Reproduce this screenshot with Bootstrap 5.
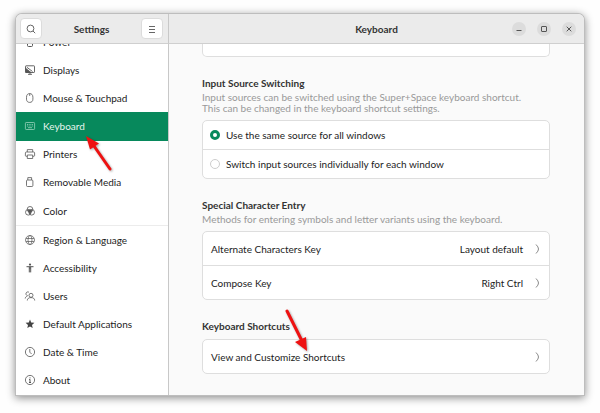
<!DOCTYPE html>
<html lang="en">
<head>
<meta charset="utf-8">
<meta name="viewport" content="width=device-width, initial-scale=1">
<title>Settings – Keyboard</title>
<link rel="stylesheet" href="https://cdn.jsdelivr.net/npm/bootstrap@5.3.0/dist/css/bootstrap.min.css">
<style>
  :root { --accent: #07895c; --line: #dedede; --edge: #c8c8c8; }
  body { font-family: Lato, "Noto Sans", sans-serif; font-size: 10px; font-weight: 400; line-height: 12px; color: #1c1c1c; background: #fefefe; }
  .desk { height: 100vh; min-height: 400px; padding: 14px 16px 18px; }
  .app-window { border-radius: 6px 6px 0 0; background: #fafafa; box-shadow: 0 0 0 1px #bdbdbd, 0 2px 9px 1px rgba(0,0,0,.45); }
  .bar { height: 30px; padding-bottom: 1px; background: #ebebeb; border-bottom: 1px solid #cfcfcf; }
  .bar h1, .bar h2 { font-size: 10px; line-height: 12px; font-weight: 700; color: #333; }
  .side { flex: 0 0 153px; border-right: 1px solid var(--edge); }
  .bar-btn { width: 22px; height: 21px; background: #fff; border: 1px solid #dcdcdc; border-radius: 4px; color: #666; }
  .win-btn { width: 14px; height: 14px; background: #dcdcdc; border: 0; color: #555; }
  .bar-btn svg, .win-btn svg, .nav-row svg, .go svg { display: block; fill: none; stroke: currentColor; }
  .bar-left { padding: 0 5px 0 4px; border-radius: 6px 0 0 0; }
  .bar-right { padding: 0 8px; border-radius: 0 6px 0 0; }
  .win-set { gap: 11px; width: 64px; }
  .side-body { background: #fff; }
  .side-list { margin-top: -16px; }
  .nav-row { color: #1c1c1c; padding: 0 9px 1px; gap: 8px; flex: 1 1 0; min-height: 0; }
  .nav-row svg { width: 10px; height: 10px; color: #555; flex: none; overflow: visible; }
  .nav-row.active { background: var(--accent); color: #e6f5ee; }
  .nav-row.active > svg { color: #9ad3bd; }
  .split { height: 1px; background: #ececec; }
  .pane { padding: 0 34px 0 33px; }
  .pane section { margin-top: 20px; }
  .box { background: #fff; border: 1px solid var(--line); border-radius: 5px; }
  .box-tail { height: 13px; border-top: 0; border-radius: 0 0 5px 5px; }
  .group-title { font-size: 10px; line-height: 12px; font-weight: 700; color: #333; margin: 0; }
  .group-title + .box { margin-top: 7px; }
  .group-note { color: #999; line-height: 11px; margin: 3px 0 6px; }
  .choice { height: 28px; padding: 0 7px; gap: 6px; min-height: 0; }
  .choice .form-check-input { width: 10px; height: 10px; margin: 0; float: none; border: 1px solid #cdcdcd; }
  .choice .form-check-input:checked { border: 3px solid var(--accent); background: #fff none; }
  .go { height: 33px; padding: 0 8px; color: #1c1c1c; background: none; border: 0; }
  .box > * + * { border-top: 1px solid var(--line); }
  .box > .choice + .choice { height: 29px; }
  .box > .go + .go { height: 34px; }
  .go svg { width: 5px; height: 10px; color: #8a8a8a; margin-right: 1px; }
  .nav-row .pointer, .go .pointer { position: absolute; pointer-events: none; z-index: 3; filter: drop-shadow(1px 1px 1px rgba(0,0,0,.35)); overflow: visible; }
  .nav-row .pointer { left: 69px; top: 22px; width: 27px; height: 36px; }
  .go-first .pointer { left: 82px; top: -31px; width: 26px; height: 43px; }
  .pointer line { stroke: #ee1111; stroke-width: 3; stroke-linecap: round; }
  .pointer path { fill: #ee1111; stroke: none; }
</style>
<script src="https://cdn.jsdelivr.net/npm/bootstrap@5.3.0/dist/js/bootstrap.bundle.min.js"></script>
</head>
<body>
<div class="desk d-flex">
  <div class="app-window d-flex flex-column flex-fill">
    <header class="d-flex flex-shrink-0">
      <div class="bar bar-left side d-flex align-items-center justify-content-between">
        <button type="button" class="bar-btn p-0 d-flex align-items-center justify-content-center" aria-label="Search">
          <svg width="10" height="10" viewBox="0 0 10 10"><circle cx="4.5" cy="4.5" r="3.4"/><path d="M7 7l2.2 2.2"/></svg>
        </button>
        <h1 class="m-0">Settings</h1>
        <button type="button" class="bar-btn p-0 d-flex align-items-center justify-content-center" aria-label="Menu">
          <svg width="8" height="8" viewBox="0 0 8 8"><path d="M1 1.5h6M1 4.500h6M1 7.500h6"/></svg>
        </button>
      </div>
      <div class="bar bar-right d-flex align-items-center flex-fill">
        <div class="win-set"></div>
        <h2 class="m-0 flex-fill text-center">Keyboard</h2>
        <div class="win-set d-flex">
          <button type="button" class="win-btn p-0 rounded-circle d-flex align-items-center justify-content-center" aria-label="Minimize"><svg width="8" height="8" viewBox="0 0 8 8"><path d="M1.500 5.500h5"/></svg></button>
          <button type="button" class="win-btn p-0 rounded-circle d-flex align-items-center justify-content-center" aria-label="Maximize"><svg width="8" height="8" viewBox="0 0 8 8"><rect x="1.500" y="1.500" width="5" height="5" rx=".5"/></svg></button>
          <button type="button" class="win-btn p-0 rounded-circle d-flex align-items-center justify-content-center" aria-label="Close"><svg width="8" height="8" viewBox="0 0 8 8"><path d="M1.700 1.700l4.600 4.600M6.300 1.700L1.700 6.300"/></svg></button>
        </div>
      </div>
    </header>
    <div class="d-flex flex-fill overflow-hidden">
      <nav class="side side-body d-flex flex-column overflow-hidden" aria-label="Settings panels">
        <div class="side-list d-flex flex-column flex-fill">
          <a href="#" class="nav-row d-flex align-items-center text-decoration-none"><svg viewBox="0 0 10 10"><rect x="2.500" y="2" width="5" height="7.500" rx="1"/><path d="M4 1h2"/></svg>Power</a>
          <a href="#" class="nav-row d-flex align-items-center text-decoration-none"><svg viewBox="0 0 10 10" stroke-width=".9"><rect x=".5" y=".8" width="9" height="6.700" rx=".6"/><path d="M.8 3.500L6 7.500H.8z" fill="currentColor"/><path d="M3 9.300h4M5 7.500v1.800M1.800 2.200l5.700 4.300" /></svg>Displays</a>
          <a href="#" class="nav-row d-flex align-items-center text-decoration-none"><svg viewBox="0 0 10 10" stroke-width=".8"><path d="M1.500 4.300C1.500 1.800 2.700.6 4.700.6s3.200 1.200 3.200 3.700v1.900c0 2-1.200 3.200-3.200 3.200S1.500 8.200 1.500 6.200z"/><path d="M4.700.6v2.300"/></svg>Mouse &amp; Touchpad</a>
          <a href="#" class="nav-row active position-relative d-flex align-items-center text-decoration-none" aria-current="page"><svg viewBox="0 0 10 10" stroke-width=".8"><rect x=".4" y="1.500" width="9.200" height="7" rx=".8"/><path d="M2 3.500h6M2 5h6" stroke-dasharray="1 .7"/><path d="M3 6.700h4"/></svg>Keyboard
            <svg class="pointer" viewBox="0 0 27 36" aria-hidden="true"><line x1="25" y1="35" x2="9" y2="12"/><path d="M1 2l13 7.500-9 6z"/></svg></a>
          <a href="#" class="nav-row d-flex align-items-center text-decoration-none"><svg viewBox="0 0 10 10" stroke-width=".8"><path d="M2.300 3V.6h5.400V3M2.300 7.300H1.200a.8.8 0 0 1-.8-.8V3.900c0-.5.4-.9.9-.9h7.400c.5 0 .9.4.9.900v2.600c0 .5-.3.8-.8.8H7.700"/><path d="M2.300 6h5.400v3.500H2.300z"/></svg>Printers</a>
          <a href="#" class="nav-row d-flex align-items-center text-decoration-none"><svg viewBox="0 0 10 10" stroke-width=".8"><rect x="1.500" y="3" width="6.400" height="6.500" rx="1"/><path d="M2.800 3V.6h3.800V3"/></svg>Removable Media</a>
          <a href="#" class="nav-row d-flex align-items-center text-decoration-none"><svg viewBox="0 0 10 10" stroke-width=".8"><circle cx="5" cy="3.300" r="2.800"/><circle cx="3.300" cy="6.300" r="2.800"/><circle cx="6.700" cy="6.300" r="2.800"/><path d="M3 4h4L5 8z" fill="currentColor"/></svg>Color</a>
          <div class="split flex-shrink-0"></div>
          <a href="#" class="nav-row d-flex align-items-center text-decoration-none"><svg viewBox="0 0 10 10" stroke-width=".7"><circle cx="5" cy="5" r="4.500"/><ellipse cx="5" cy="5" rx="2" ry="4.500"/><path d="M1 3.500h8M1 6.500h8"/></svg>Region &amp; Language</a>
          <a href="#" class="nav-row d-flex align-items-center text-decoration-none"><svg viewBox="0 0 10 10"><circle cx="5" cy="1.600" r="1.100" fill="currentColor" stroke="none"/><path d="M1.500 3.700h7M5 3.700v2.300M4.300 4v5.400M5.700 4v5.400"/></svg>Accessibility</a>
          <a href="#" class="nav-row d-flex align-items-center text-decoration-none"><svg viewBox="0 0 10 10" stroke-width=".8"><circle cx="6" cy="4.300" r="2"/><path d="M2.300 9.500c0-2 1.500-2.900 3.700-2.900s3.700.9 3.700 2.900M.2 7.500c.1-1.200.8-1.900 2-2.200M4 1.300A1.900 1.900 0 1 0 2.700 4.700"/></svg>Users</a>
          <a href="#" class="nav-row d-flex align-items-center text-decoration-none"><svg viewBox="0 0 10 10"><path fill="#444" stroke="none" d="M5 .6l1.200 2.900 3.200.3-2.400 2.100.7 3.200L5 7.400 2.300 9.100 3 5.900.6 3.800l3.200-.3z"/></svg>Default Applications</a>
          <a href="#" class="nav-row d-flex align-items-center text-decoration-none"><svg viewBox="0 0 10 10" stroke-width=".8"><circle cx="5" cy="5" r="4.600"/><path d="M4.800 2v3.200l1.800 1.800"/></svg>Date &amp; Time</a>
          <a href="#" class="nav-row d-flex align-items-center text-decoration-none"><svg viewBox="0 0 10 10" stroke-width=".8"><circle cx="5" cy="5" r="4.600"/><path d="M5 4.300v3.200M4.200 4.500H5M4 7.500h2M5 2.400v1" stroke-width="1"/></svg>About</a>
        </div>
      </nav>
      <main class="pane flex-fill overflow-hidden">
        <div class="box box-tail"></div>
        <section>
          <div id="switching" class="group-title">Input Source Switching</div>
          <p class="group-note">Input sources can be switched using the Super+Space keyboard shortcut.<br>This can be changed in the keyboard shortcut settings.</p>
          <div class="box" role="radiogroup" aria-labelledby="switching">
            <div class="choice d-flex align-items-center"><input class="form-check-input" type="radio" name="src" id="same" checked><label for="same">Use the same source for all windows</label></div>
            <div class="choice d-flex align-items-center"><input class="form-check-input" type="radio" name="src" id="each"><label for="each">Switch input sources individually for each window</label></div>
          </div>
        </section>
        <section>
          <div class="group-title">Special Character Entry</div>
          <p class="group-note">Methods for entering symbols and letter variants using the keyboard.</p>
          <div class="box">
            <button type="button" class="go w-100 d-flex align-items-center"><span>Alternate Characters Key</span><span class="ms-auto me-2">Layout default</span><svg viewBox="0 0 5 10" class="ms-1"><path d="M1 .5Q3.500 3 3.500 5T1 9.500"/></svg></button>
            <button type="button" class="go w-100 d-flex align-items-center"><span>Compose Key</span><span class="ms-auto me-2">Right Ctrl</span><svg viewBox="0 0 5 10" class="ms-1"><path d="M1 .5Q3.500 3 3.500 5T1 9.500"/></svg></button>
          </div>
        </section>
        <section>
          <div class="group-title">Keyboard Shortcuts</div>
          <div class="box">
            <button type="button" class="go go-first position-relative w-100 d-flex align-items-center"><span>View and Customize Shortcuts</span><svg viewBox="0 0 5 10" class="ms-auto"><path d="M1 .5Q3.500 3 3.500 5T1 9.500"/></svg>
              <svg class="pointer" viewBox="0 0 26 43" aria-hidden="true"><line x1="2" y1="2" x2="17" y2="32"/><path d="M22 42L10 33l11-5z"/></svg></button>
          </div>
        </section>
      </main>
    </div>
  </div>
</div>
</body>
</html>
